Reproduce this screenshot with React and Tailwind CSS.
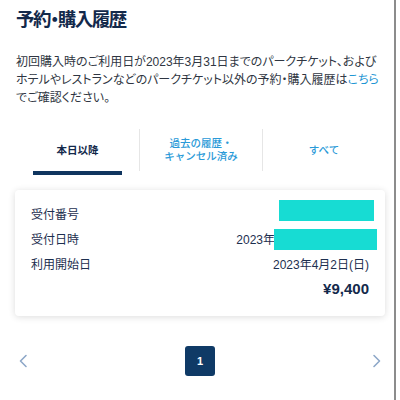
import React from "react";

const FONT = { fontFamily: '"Liberation Sans", "Noto Sans CJK JP", sans-serif' };

const TABS = [
  { label: "本日以降", active: true },
  { label: "過去の履歴・\nキャンセル済み" },
  { label: "すべて" },
];

function Chevron({ dir = "left" }) {
  return (
    <svg width="10" height="14" viewBox="0 0 10 14" fill="none">
      <path
        d={dir === "left" ? "M8 1.5 L2.5 7 L8 12.5" : "M2 1.5 L7.5 7 L2 12.5"}
        stroke="#8ea8c8"
        strokeWidth="1.6"
        strokeLinecap="round"
        strokeLinejoin="round"
      />
    </svg>
  );
}

export default function App() {
  return (
    <div className="w-[400px] h-[400px] bg-white flex overflow-hidden" style={FONT}>
      <div className="w-[396px] h-full border-r-2 border-[#8c8c8c] pl-[15px] pr-[9px]">
        {/* title */}
        <h1 className="pt-[7px] pl-[1px] text-[18.5px] leading-[26px] tracking-[-1.5px] font-bold text-[#13294b] [font-feature-settings:'palt']">
          予約・購入履歴
        </h1>

        {/* note */}
        <p className="mt-[20px] pl-[1px] text-[12px] leading-[18px] text-[#2f3642] whitespace-nowrap [font-feature-settings:'palt']">
          初回購入時のご利用日が2023年3月31日までのパークチケット、および
          <br />
          ホテルやレストランなどのパークチケット以外の予約・購入履歴は
          <span className="text-[#1f97d4]">こちら</span>
          <br />
          でご確認ください。
        </p>

        {/* tabs */}
        <div className="mt-[15px] flex pl-[1px]">
          {TABS.map((t, i) => (
            <div key={i} className="flex-1 h-[53px] flex flex-col">
              <div
                className={
                  "mt-[7px] flex-1 flex items-center justify-center text-center whitespace-pre-line text-[10.5px] leading-[13px] " +
                  (i > 0 ? "border-l border-[#e6e6e6] " : "") +
                  (t.active ? "font-bold text-[#13294b]" : "font-medium text-[#2a9ad8]")
                }
              >
                {t.label}
              </div>
              <div className={"h-[4px] mx-[17px] " + (t.active ? "bg-[#0f355f]" : "")} />
            </div>
          ))}
        </div>

        {/* card */}
        <div className="mt-[15px] rounded-[4px] bg-white shadow-[0_1px_7px_rgba(0,0,0,0.14)] pt-[12px] pb-[14px] pl-[16px] pr-[16px] text-[12px] text-[#1d2f4f]">
          <div className="h-[25px] flex items-center justify-between">
            <span>受付番号</span>
            <span className="relative -top-[4px] -mr-[5px] w-[95px] h-[21px] bg-[#17dcd3]" />
          </div>
          <div className="h-[25px] flex items-center justify-between">
            <span>受付日時</span>
            <span className="flex items-center -mr-[8px]">
              <span>2023年</span>
              <span className="w-[103px] h-[21px] bg-[#17dcd3] -ml-[1px]" />
            </span>
          </div>
          <div className="h-[25px] flex items-center justify-between">
            <span>利用開始日</span>
            <span>2023年4月2日(日)</span>
          </div>
          <div className="h-[25px] flex items-center justify-end">
            <span className="text-[15px] font-bold text-[#13294b]">¥9,400</span>
          </div>
        </div>

        {/* pagination */}
        <div className="mt-[30px] flex items-center justify-between px-[3px]">
          <Chevron dir="left" />
          <div className="w-[30px] h-[30px] rounded-[3px] bg-[#0f3a66] flex items-center justify-center text-white text-[11px] font-bold">
            1
          </div>
          <Chevron dir="right" />
        </div>
      </div>
    </div>
  );
}
